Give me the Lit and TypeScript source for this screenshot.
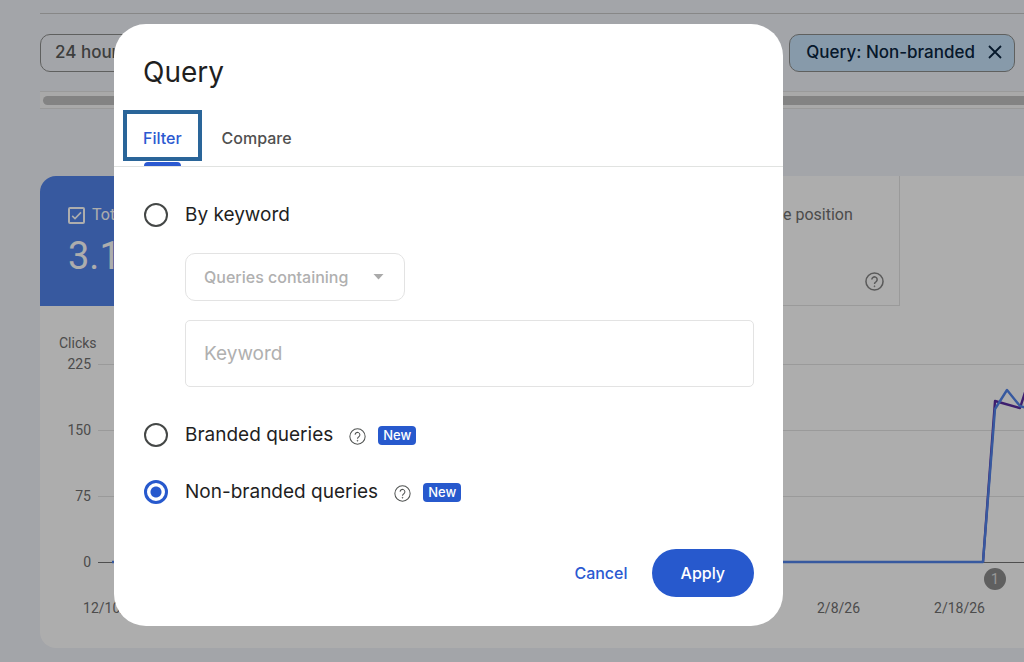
import { LitElement, html, css, svg } from "lit";
import { customElement, state } from "lit/decorators.js";

const helpIcon = (size: number, stroke: number) => html`<svg width=${size} height=${size} viewBox="0 0 20 20" fill="none" stroke="currentColor" stroke-width=${stroke} aria-hidden="true">
  <circle cx="10" cy="10" r="9" />
  <path d="M7.2 8a2.8 2.8 0 1 1 4.6 2.1C10.7 10.9 10 11.3 10 12.6" />
  <circle cx="10" cy="15" r="0.5" fill="currentColor" stroke-width="0.9" />
</svg>`;

@customElement("performance-chart")
export class PerformanceChart extends LitElement {
  static styles = css`
    :host { display: block; font: 14px/20px Roboto, sans-serif; color: #707070; }
    .name { margin: 0 0 1px 19px; }
    .body { display: grid; grid-template-columns: 51px 1fr; column-gap: 7px; }
    .scale { display: flex; flex-direction: column; gap: 46px; text-align: right; }
    .plot { display: block; width: 100%; height: 240px; overflow: hidden; }
    .dates {
      display: grid; grid-template-columns: repeat(8, 121px);
      margin-left: 12px; line-height: 28px; text-align: center;
    }
    .d7 { grid-column: 7; }
    .num { font: 14px Roboto, sans-serif; fill: #e0e0e0; }
  `;

  render() {
    return html`
      <div class="name">Clicks</div>
      <div class="body">
        <div class="scale">${[225, 150, 75, 0].map((n) => html`<span>${n}</span>`)}</div>
        <svg class="plot" role="img" aria-label="Clicks over time">
          ${[10, 76, 142].map((y) => svg`<rect x="0" y=${y} width="100%" height="1" fill="#e3e3e3" />`)}
          <rect x="0" y="208" width="100%" height="1" fill="#757575" />
          <polyline points="885,208 897,47 922,54 929,32" fill="none" stroke="#5b2da3" stroke-width="2.4" stroke-linejoin="round" />
          <polyline points="14,208 885,208 897,55 909,36 922,52 932,55" fill="none" stroke="#5183eb" stroke-width="2.4" stroke-linejoin="round" />
          <circle cx="897" cy="225" r="11" fill="#8c8c8c" />
          <text class="num" x="897" y="230" text-anchor="middle">1</text>
        </svg>
      </div>
      <div class="dates"><span>12/10/25</span><span class="d7">2/8/26</span><span>2/18/26</span></div>
    `;
  }
}

@customElement("query-dialog")
export class QueryDialog extends LitElement {
  @state() private mode = "non-branded";

  static styles = css`
    :host { display: block; font: 16px/24px Inter, sans-serif; color: #1f1f1f; }
    .dialog { background: #ffffff; border-radius: 32px; overflow: hidden; }
    .title { margin: 0; padding: 30px 29px 20px; font-size: 28px; line-height: 36px; font-weight: 400; }
    .tabs { display: flex; height: 56px; padding-left: 9px; border-bottom: 1px solid #e1e3e1; }
    .tab {
      position: relative; height: 51px; padding: 4px 16px 0; border: 4px solid transparent;
      background: none; font: inherit; font-weight: 500; color: #505050;
    }
    .tab.on { border-color: #2a6599; color: #2b59d1; }
    .tab.on::after {
      content: ""; position: absolute; left: 17px; right: 17px; bottom: -9px;
      height: 4px; border-radius: 4px 4px 0 0; background: #2b59d1;
    }
    .form { padding: 34px 29px 29px; }
    .choice { display: flex; align-items: center; min-height: 28px; font-size: 19px; line-height: 28px; }
    .choice label { display: flex; align-items: center; gap: 17px; }
    .radio {
      appearance: none; box-sizing: border-box; width: 24px; height: 24px; margin: 0 0 0 1px;
      border: 2px solid #444746; border-radius: 50%; outline: 0;
    }
    .radio:checked { border: 3px solid #2759cd; background: radial-gradient(circle, #2759cd 5px, #ffffff 6px); }
    .fields { display: flex; flex-direction: column; align-items: flex-start; gap: 19px; padding: 24px 0 34px 42px; }
    .picker { position: relative; display: flex; align-items: center; width: 220px; }
    .select {
      appearance: none; box-sizing: border-box; width: 100%; height: 48px; padding: 0 18px; margin: 0;
      border: 1px solid #e3e3e3; border-radius: 10px; background: #ffffff;
      font: inherit; font-weight: 500; color: #b0b0b0; opacity: 1;
    }
    .caret { position: absolute; right: 21px; color: #aaaaaa; }
    .text {
      box-sizing: border-box; width: 100%; height: 67px; padding: 0 18px; margin: 0;
      border: 1px solid #e3e3e3; border-radius: 5px; background: #ffffff; font: inherit; font-size: 19px;
    }
    .text::placeholder { color: #b0b0b0; opacity: 1; }
    .help { display: flex; padding: 0; margin: 2px 12px 0 16px; border: 0; background: none; color: #505352; }
    .badge { padding: 0 5px; border-radius: 4px; background: #2759cd; color: #ffffff; font-size: 13px; line-height: 19px; font-weight: 500; }
    .branded { margin-bottom: 29px; }
    .actions { display: flex; justify-content: flex-end; margin-top: 43px; }
    .btn { height: 48px; padding: 0 24px; border: 0; border-radius: 24px; background: none; font: inherit; font-weight: 500; color: #2b59d1; }
    .btn.apply { padding: 0 29px; background: #2759cd; color: #ffffff; }
  `;

  private radio(value: string, label: string) {
    return html`<label>
      <input class="radio" type="radio" name="mode" .checked=${this.mode === value} @change=${() => (this.mode = value)} />
      <span>${label}</span>
    </label>`;
  }

  private extras() {
    return html`<button class="help" type="button" aria-label="Help">${helpIcon(17, 1.2)}</button><span class="badge">New</span>`;
  }

  render() {
    const off = this.mode !== "keyword";
    return html`
      <section class="dialog" role="dialog" aria-labelledby="title">
        <h2 class="title" id="title">Query</h2>
        <div class="tabs" role="tablist">
          <button class="tab on" role="tab" aria-selected="true">Filter</button>
          <button class="tab" role="tab" aria-selected="false">Compare</button>
        </div>
        <form class="form" @submit=${(e: Event) => e.preventDefault()}>
          <div class="choice">${this.radio("keyword", "By keyword")}</div>
          <div class="fields">
            <div class="picker">
              <select class="select" aria-label="Match type" ?disabled=${off}><option>Queries containing</option></select>
              <svg class="caret" width="11" height="6" viewBox="0 0 11 6" aria-hidden="true"><path d="M0.5 0h10l-5 5.5z" fill="currentColor" /></svg>
            </div>
            <input class="text" type="text" aria-label="Keyword" placeholder="Keyword" ?disabled=${off} />
          </div>
          <div class="choice branded">${this.radio("branded", "Branded queries")}${this.extras()}</div>
          <div class="choice">${this.radio("non-branded", "Non-branded queries")}${this.extras()}</div>
          <div class="actions">
            <button class="btn" type="button">Cancel</button>
            <button class="btn apply" type="submit">Apply</button>
          </div>
        </form>
      </section>
    `;
  }
}

@customElement("app-root")
export class AppRoot extends LitElement {
  static styles = css`
    :host {
      display: block; position: relative; min-height: 100vh; overflow: hidden;
      background: #f1f3f9; font: 17px/24px Inter, sans-serif;
    }
    .page { padding: 13px 0 14px 40px; }
    .bar { display: flex; gap: 10px; padding: 20px 9px 19px 0; border-top: 1px solid #c7c7c7; }
    .chip {
      box-sizing: border-box; display: flex; align-items: center; height: 38px; padding: 0 14px 2px;
      border: 1px solid #8c8e8c; border-radius: 10px; background: none; font: inherit; font-weight: 500; color: #5a5c5b;
    }
    .range { flex: 1; }
    .query { gap: 13px; padding: 0 12px 2px 16px; background: #c8e4fb; color: #0a2540; }
    .track { padding: 4px 0 3px 3px; border: solid #e3e3e3; border-width: 1px 0; background: #fafafa; }
    .thumb { height: 9px; border-radius: 5px 0 0 5px; background: #c1c1c1; }
    .card { margin-top: 67px; padding-bottom: 26px; border-radius: 16px 0 0 16px; background: #ffffff; overflow: hidden; }
    .tiles { display: grid; grid-template-columns: repeat(4, 215px); margin-bottom: 27px; font-family: Roboto, sans-serif; }
    .tile {
      box-sizing: border-box; height: 130px; padding: 27px 15px 14px 28px; font-size: 16px; color: #707070;
      border: solid #e3e3e3; border-width: 0 1px 1px 0; display: flex; flex-direction: column;
    }
    .clicks { border: 0; background: #5183eb; color: #ffffff; }
    .last { grid-column: 4; padding-left: 25px; justify-content: space-between; }
    .check { display: flex; align-items: center; gap: 7px; }
    .box {
      appearance: none; box-sizing: border-box; width: 17px; height: 17px; margin: 0;
      border: 2px solid currentColor; border-radius: 2px; color: inherit;
    }
    .mark { position: absolute; margin-left: 2px; }
    .value { margin-top: 6px; font-size: 38px; line-height: 46px; }
    .help { align-self: flex-end; display: flex; padding: 0; border: 0; background: none; color: #858585; }
    .scrim { position: absolute; inset: 0; padding: 24px 241px 36px 114px; background: rgba(0, 0, 0, 0.32); }
  `;

  render() {
    return html`
      <main class="page">
        <div class="bar">
          <button class="chip range">24 hours</button>
          <button class="chip query">
            <span>Query: Non-branded</span>
            <svg width="14" height="14" viewBox="0 0 14 14" stroke="currentColor" stroke-width="1.8" aria-hidden="true"><path d="M1 1l12 12M13 1L1 13" /></svg>
          </button>
        </div>
        <div class="track"><div class="thumb"></div></div>
        <div class="card">
          <div class="tiles">
            <div class="tile clicks">
              <label class="check">
                <input class="box" type="checkbox" checked />
                <svg class="mark" width="13" height="13" viewBox="0 0 13 13" fill="none" stroke="currentColor" stroke-width="1.6" aria-hidden="true"><path d="M2.2 6.8l2.8 2.7L11 3.4" /></svg>
                <span>Total clicks</span>
              </label>
              <div class="value">3.12K</div>
            </div>
            <div class="tile last">
              <label class="check"><input class="box" type="checkbox" /><span>Average position</span></label>
              <button class="help" aria-label="About average position">${helpIcon(19, 1.6)}</button>
            </div>
          </div>
          <performance-chart></performance-chart>
        </div>
      </main>
      <div class="scrim"><query-dialog></query-dialog></div>
    `;
  }
}
